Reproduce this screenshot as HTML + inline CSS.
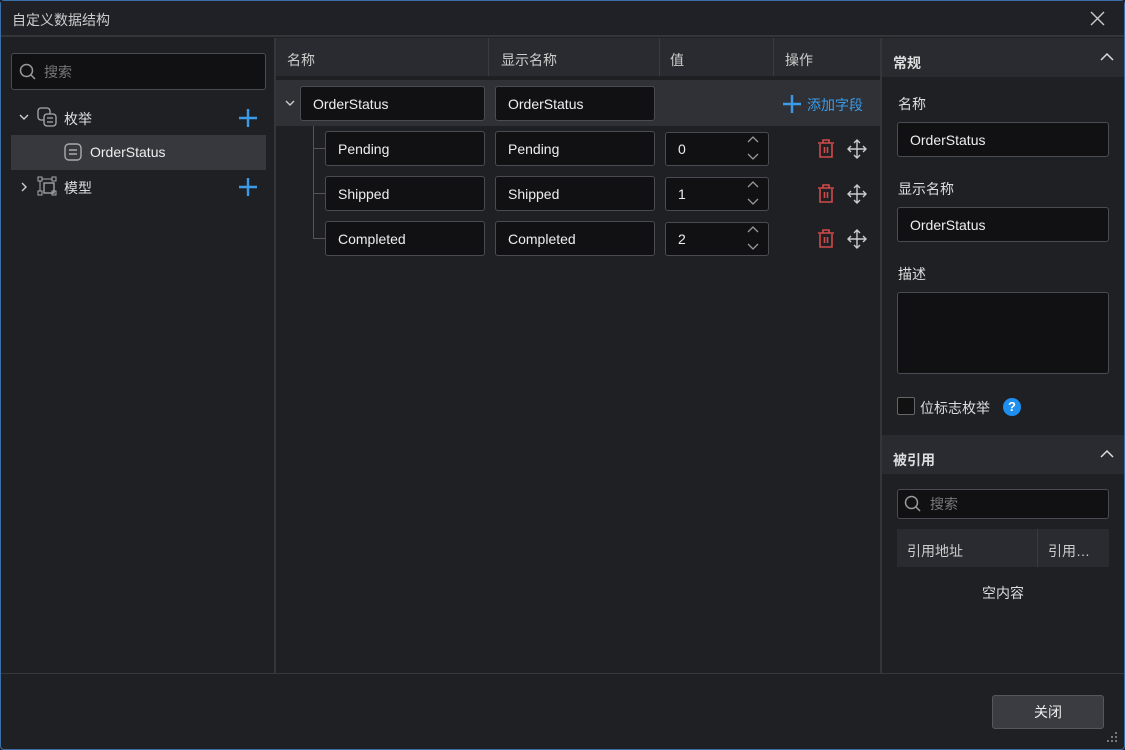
<!DOCTYPE html><html><head><meta charset="utf-8"><style>
*{box-sizing:border-box;margin:0;padding:0}
body{width:1125px;height:750px;background:#1f2024;font-family:"Liberation Sans","Noto Sans CJK SC",sans-serif;color:#e6e6e6;font-size:14px;position:relative;overflow:hidden}
.a{position:absolute}
.inp{position:absolute;background:#111113;border:1px solid #4a4c52;border-radius:3px;padding-left:12px;display:flex;align-items:center;color:#eee;font-size:14px}
.hd{position:absolute;background:#2a2b30}
.lbl{position:absolute;font-size:14px;color:#ddd}
</style></head><body>
<div class="a" style="left:0;top:0;width:1125px;height:750px;border:1px solid #3a6ea8;border-radius:4px"></div>
<div class="a" style="left:1px;top:1px;width:1123px;height:36px;background:#202126;border-bottom:2px solid #333539"></div>
<div class="lbl" style="left:12px;top:10px;color:#ccc">自定义数据结构</div>
<svg class="a" style="left:1090px;top:11px" width="15" height="15"><path d="M1 1L14 14M14 1L1 14" stroke="#ccc" stroke-width="1.4"/></svg>
<!-- left -->
<div class="a" style="left:274px;top:38px;width:2px;height:635px;background:#34363a"></div>
<div class="inp" style="left:11px;top:53px;width:255px;height:37px;padding-left:32px;color:#777">搜索</div>
<svg class="a" style="left:19px;top:63px" width="18" height="18"><circle cx="7.5" cy="7.5" r="6" stroke="#999" stroke-width="1.5" fill="none"/><path d="M12 12L16 16" stroke="#999" stroke-width="1.5"/></svg>
<svg class="a" style="left:19px;top:112px" width="10" height="10"><path d="M1 3L5 7L9 3" stroke="#ccc" stroke-width="1.4" fill="none"/></svg>
<svg class="a" style="left:37px;top:107px" width="22" height="22"><rect x="1" y="1" width="12" height="12" rx="3" stroke="#aaa" fill="none" stroke-width="1.3"/><rect x="7" y="7" width="12" height="12" rx="3" stroke="#aaa" fill="#1f2024" stroke-width="1.3"/><path d="M10 11h6M10 15h6" stroke="#aaa" stroke-width="1.3"/></svg>
<div class="lbl" style="left:64px;top:109px">枚举</div>
<svg class="a" style="left:238px;top:108px" width="20" height="20"><path d="M10 1V19M1 10H19" stroke="#3b9be8" stroke-width="2.4"/></svg>
<div class="a" style="left:11px;top:135px;width:255px;height:35px;background:#36383d"></div>
<svg class="a" style="left:64px;top:143px" width="20" height="20"><rect x="1" y="1" width="16" height="16" rx="4" stroke="#aaa" fill="none" stroke-width="1.4"/><path d="M5 7h8M5 11h8" stroke="#aaa" stroke-width="1.4"/></svg>
<div class="lbl" style="left:90px;top:144px;color:#eee">OrderStatus</div>
<svg class="a" style="left:19px;top:182px" width="10" height="10"><path d="M3 1L7 5L3 9" stroke="#ccc" stroke-width="1.4" fill="none"/></svg>
<svg class="a" style="left:37px;top:176px" width="22" height="22"><rect x="1" y="1" width="4" height="4" stroke="#aaa" fill="none"/><rect x="15" y="1" width="4" height="4" stroke="#aaa" fill="none"/><rect x="1" y="15" width="4" height="4" stroke="#aaa" fill="none"/><rect x="15" y="15" width="4" height="4" stroke="#aaa" fill="none"/><rect x="7" y="7" width="10" height="10" stroke="#aaa" fill="none" stroke-width="1.3"/><path d="M3 5V15M5 3H15" stroke="#aaa"/></svg>
<div class="lbl" style="left:64px;top:178px">模型</div>
<svg class="a" style="left:238px;top:177px" width="20" height="20"><path d="M10 1V19M1 10H19" stroke="#3b9be8" stroke-width="2.4"/></svg>
<!-- middle -->
<div class="hd" style="left:276px;top:38px;width:604px;height:38px"></div>
<div class="a" style="left:488px;top:38px;width:1px;height:38px;background:#3a3c41"></div>
<div class="a" style="left:659px;top:38px;width:1px;height:38px;background:#3a3c41"></div>
<div class="a" style="left:773px;top:38px;width:1px;height:38px;background:#3a3c41"></div>
<div class="lbl" style="left:287px;top:50px;color:#ccc">名称</div>
<div class="lbl" style="left:501px;top:50px;color:#ccc">显示名称</div>
<div class="lbl" style="left:670px;top:50px;color:#ccc">值</div>
<div class="lbl" style="left:785px;top:50px;color:#ccc">操作</div>
<div class="a" style="left:276px;top:80px;width:604px;height:46px;background:#2f3136"></div>
<svg class="a" style="left:285px;top:98px" width="10" height="10"><path d="M1 3L5 7L9 3" stroke="#ccc" stroke-width="1.4" fill="none"/></svg>
<div class="inp" style="left:300px;top:86px;width:185px;height:35px">OrderStatus</div>
<div class="inp" style="left:495px;top:86px;width:160px;height:35px">OrderStatus</div>
<svg class="a" style="left:782px;top:94px" width="20" height="20"><path d="M10 1V19M1 10H19" stroke="#3b9be8" stroke-width="2.4"/></svg>
<div class="lbl" style="left:807px;top:95px;color:#3b9be8">添加字段</div>
<div class="a" style="left:313px;top:126px;width:1px;height:113px;background:#555"></div>
<div class="a" style="left:313px;top:148px;width:12px;height:1px;background:#555"></div>
<div class="a" style="left:313px;top:193px;width:12px;height:1px;background:#555"></div>
<div class="a" style="left:313px;top:238px;width:12px;height:1px;background:#555"></div>
<div class="inp" style="left:325px;top:131px;width:160px;height:35px">Pending</div>
<div class="inp" style="left:495px;top:131px;width:160px;height:35px">Pending</div>
<div class="inp" style="left:665px;top:132px;width:104px;height:34px">0</div>
<div class="inp" style="left:325px;top:176px;width:160px;height:35px">Shipped</div>
<div class="inp" style="left:495px;top:176px;width:160px;height:35px">Shipped</div>
<div class="inp" style="left:665px;top:177px;width:104px;height:34px">1</div>
<div class="inp" style="left:325px;top:221px;width:160px;height:35px">Completed</div>
<div class="inp" style="left:495px;top:221px;width:160px;height:35px">Completed</div>
<div class="inp" style="left:665px;top:222px;width:104px;height:34px">2</div>
<svg class="a" style="left:745px;top:134px" width="16" height="30"><path d="M3 8L8 3L13 8M3 20L8 25L13 20" stroke="#999" stroke-width="1.3" fill="none"/></svg>
<svg class="a" style="left:745px;top:179px" width="16" height="30"><path d="M3 8L8 3L13 8M3 20L8 25L13 20" stroke="#999" stroke-width="1.3" fill="none"/></svg>
<svg class="a" style="left:745px;top:224px" width="16" height="30"><path d="M3 8L8 3L13 8M3 20L8 25L13 20" stroke="#999" stroke-width="1.3" fill="none"/></svg>
<svg class="a" style="left:817px;top:139px" width="20" height="20"><path d="M1 4H17M6 4V1H12V4M3 5V18H15V5M7.5 8V14M10.5 8V14" stroke="#d14a4a" stroke-width="1.6" fill="none"/></svg>
<svg class="a" style="left:817px;top:184px" width="20" height="20"><path d="M1 4H17M6 4V1H12V4M3 5V18H15V5M7.5 8V14M10.5 8V14" stroke="#d14a4a" stroke-width="1.6" fill="none"/></svg>
<svg class="a" style="left:817px;top:229px" width="20" height="20"><path d="M1 4H17M6 4V1H12V4M3 5V18H15V5M7.5 8V14M10.5 8V14" stroke="#d14a4a" stroke-width="1.6" fill="none"/></svg>
<svg class="a" style="left:847px;top:139px" width="20" height="20"><path d="M10 1V19M1 10H19M7 4L10 1L13 4M7 16L10 19L13 16M4 7L1 10L4 13M16 7L19 10L16 13" stroke="#ccc" stroke-width="1.4" fill="none"/></svg>
<svg class="a" style="left:847px;top:184px" width="20" height="20"><path d="M10 1V19M1 10H19M7 4L10 1L13 4M7 16L10 19L13 16M4 7L1 10L4 13M16 7L19 10L16 13" stroke="#ccc" stroke-width="1.4" fill="none"/></svg>
<svg class="a" style="left:847px;top:229px" width="20" height="20"><path d="M10 1V19M1 10H19M7 4L10 1L13 4M7 16L10 19L13 16M4 7L1 10L4 13M16 7L19 10L16 13" stroke="#ccc" stroke-width="1.4" fill="none"/></svg>
<!-- right -->
<div class="a" style="left:880px;top:38px;width:2px;height:635px;background:#34363a"></div>
<div class="hd" style="left:882px;top:38px;width:242px;height:39px"></div>
<div class="lbl" style="left:893px;top:53px;font-weight:bold">常规</div>
<svg class="a" style="left:1100px;top:52px" width="14" height="10"><path d="M1 8L7 2L13 8" stroke="#ddd" stroke-width="1.5" fill="none"/></svg>
<div class="lbl" style="left:898px;top:94px">名称</div>
<div class="inp" style="left:897px;top:122px;width:212px;height:35px">OrderStatus</div>
<div class="lbl" style="left:898px;top:179px">显示名称</div>
<div class="inp" style="left:897px;top:207px;width:212px;height:35px">OrderStatus</div>
<div class="lbl" style="left:898px;top:264px">描述</div>
<div class="inp" style="left:897px;top:292px;width:212px;height:82px"></div>
<div class="a" style="left:897px;top:397px;width:18px;height:18px;border:1px solid #666;border-radius:2px;background:#111"></div>
<div class="lbl" style="left:920px;top:398px">位标志枚举</div>
<div class="a" style="left:1003px;top:398px;width:18px;height:18px;border-radius:50%;background:#1e8ff0;color:#fff;font-size:13px;font-weight:bold;text-align:center;line-height:18px">?</div>
<div class="hd" style="left:882px;top:435px;width:242px;height:39px"></div>
<div class="lbl" style="left:893px;top:450px;font-weight:bold">被引用</div>
<svg class="a" style="left:1100px;top:449px" width="14" height="10"><path d="M1 8L7 2L13 8" stroke="#ddd" stroke-width="1.5" fill="none"/></svg>
<div class="inp" style="left:897px;top:489px;width:212px;height:30px;padding-left:32px;color:#777">搜索</div>
<svg class="a" style="left:904px;top:495px" width="18" height="18"><circle cx="7.5" cy="7.5" r="6" stroke="#999" stroke-width="1.5" fill="none"/><path d="M12 12L16 16" stroke="#999" stroke-width="1.5"/></svg>
<div class="hd" style="left:897px;top:529px;width:212px;height:38px"></div>
<div class="a" style="left:1037px;top:529px;width:1px;height:38px;background:#3a3c41"></div>
<div class="lbl" style="left:907px;top:541px;color:#ccc">引用地址</div>
<div class="lbl" style="left:1048px;top:541px;color:#ccc">引用…</div>
<div class="lbl" style="left:982px;top:583px">空内容</div>
<!-- footer -->
<div class="a" style="left:1px;top:673px;width:1123px;height:1px;background:#36383c"></div>
<div class="a" style="left:992px;top:695px;width:112px;height:34px;background:#3a3c41;border:1px solid #55575c;border-radius:3px;text-align:center;line-height:32px;color:#eee">关闭</div>
<svg class="a" style="left:1107px;top:732px" width="12" height="12"><g fill="#777"><rect x="8" y="0" width="2" height="2"/><rect x="4" y="4" width="2" height="2"/><rect x="8" y="4" width="2" height="2"/><rect x="0" y="8" width="2" height="2"/><rect x="4" y="8" width="2" height="2"/><rect x="8" y="8" width="2" height="2"/></g></svg>
</body></html>
